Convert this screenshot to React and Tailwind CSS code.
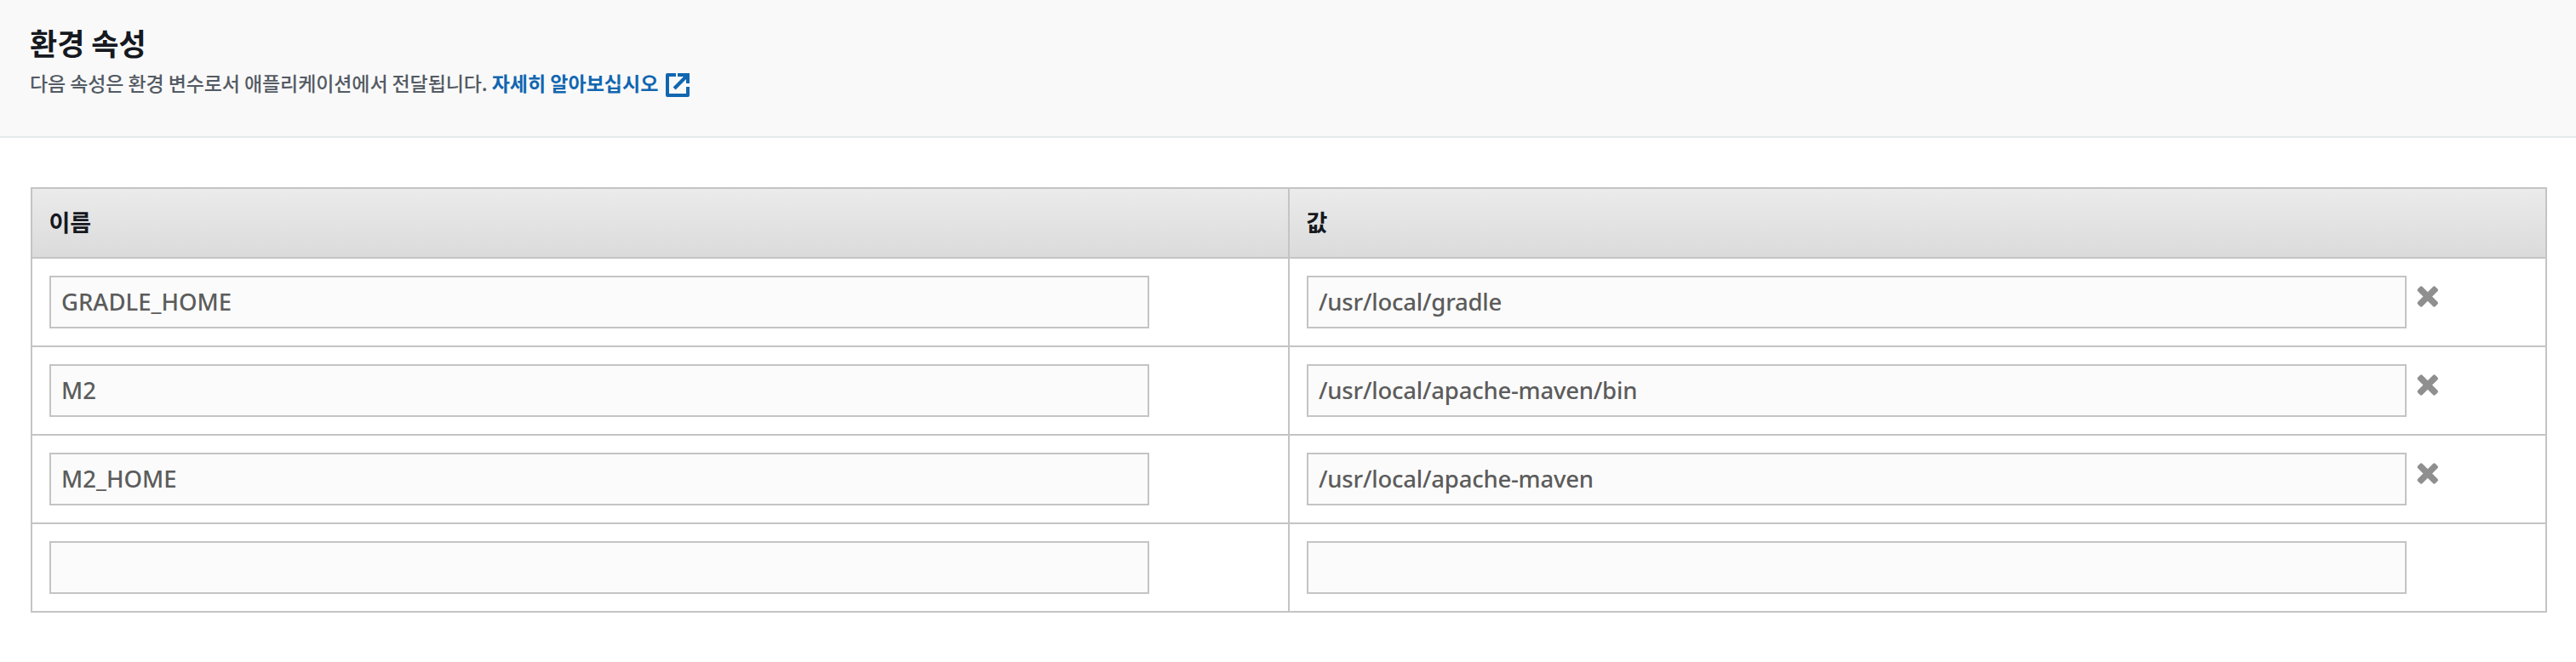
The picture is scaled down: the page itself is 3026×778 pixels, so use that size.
const variables = [
  { name: "GRADLE_HOME", value: "/usr/local/gradle" },
  { name: "M2", value: "/usr/local/apache-maven/bin" },
  { name: "M2_HOME", value: "/usr/local/apache-maven" },
  { name: "", value: "" },
];

function ExternalIcon() {
  return (
    <svg className="ml-[9px] mt-[5px] size-7 shrink-0" viewBox="0 0 28 28" fill="#1166b0">
      <path d="M2 0H12V4H4V24H24V16H28V26a2 2 0 0 1-2 2H2a2 2 0 0 1-2-2V2a2 2 0 0 1 2-2Z" />
      <path d="M14 0H28V12H24V7L11.6 19.4L8.6 16.4L21 4H14Z" />
    </svg>
  );
}

function RemoveIcon() {
  return (
    <svg className="size-8" viewBox="0 0 32 32" fill="#8f8f8f">
      <g transform="translate(15.8 16.5)">
        <rect x="-14.6" y="-3.8" width="29.2" height="7.6" rx="2" transform="rotate(45)" />
        <rect x="-14.6" y="-3.8" width="29.2" height="7.6" rx="2" transform="rotate(-45)" />
      </g>
    </svg>
  );
}

function HeaderCell({ children, className = "" }) {
  return (
    <div className={`flex h-[82px] items-center border-b-2 border-[#c4c4c4] bg-linear-to-b from-[#ebebeb] to-[#dbdbdb] pb-[2px] pl-[19.5px] font-['Noto_Sans_CJK_KR',sans-serif] text-[27px] leading-10 font-bold text-[#16191f] ${className}`}>
      {children}
    </div>
  );
}

function Field({ label, value, className = "" }) {
  return (
    <input
      aria-label={label}
      defaultValue={value}
      className={`h-[62px] w-[1292px] border-2 border-[#c4c4c4] bg-[#fbfbfb] pb-[2px] pl-3 font-['Noto_Sans',sans-serif] text-[27.5px] font-medium text-[#5c5c5c] outline-none ${className}`}
    />
  );
}

export default function App() {
  return (
    <div className="min-h-screen bg-white">
      <header className="h-[162px] border-b-2 border-[#e7ebeb] bg-[#f9f9f9] pt-[30px] pl-[35px] font-['Noto_Sans_CJK_KR',sans-serif]">
        <h2 className="text-[35px] leading-10 font-bold text-[#16191f]">환경 속성</h2>
        <div className="mt-[11px] flex text-[23px] leading-8">
          <p className="font-medium tracking-[-0.1px] whitespace-pre text-[#545b64]">다음 속성은 환경 변수로서 애플리케이션에서 전달됩니다. </p>
          <a className="flex font-bold text-[#1166b0]">
            자세히 알아보십시오
            <ExternalIcon />
          </a>
        </div>
      </header>
      <main className="pt-[58px] pr-[34px] pl-9">
        <div className="border-x-2 border-t-2 border-[#c4c4c4]">
          <div className="grid grid-cols-[1475px_1fr]">
            <HeaderCell>이름</HeaderCell>
            <HeaderCell className="border-l-2">값</HeaderCell>
          </div>
          {variables.map((v, i) => (
            <div key={i} className="grid h-[104px] grid-cols-[1475px_1fr] border-b-2 border-[#c4c4c4]">
              <div className="p-5">
                <Field label="이름" value={v.name} />
              </div>
              <div className="flex items-start border-l-2 border-[#c4c4c4] p-5">
                <Field label="값" value={v.value} className="tracking-[-0.23px]" />
                {v.name && (
                  <button className="mt-2 ml-[9px]" type="button">
                    <RemoveIcon />
                  </button>
                )}
              </div>
            </div>
          ))}
        </div>
      </main>
    </div>
  );
}
